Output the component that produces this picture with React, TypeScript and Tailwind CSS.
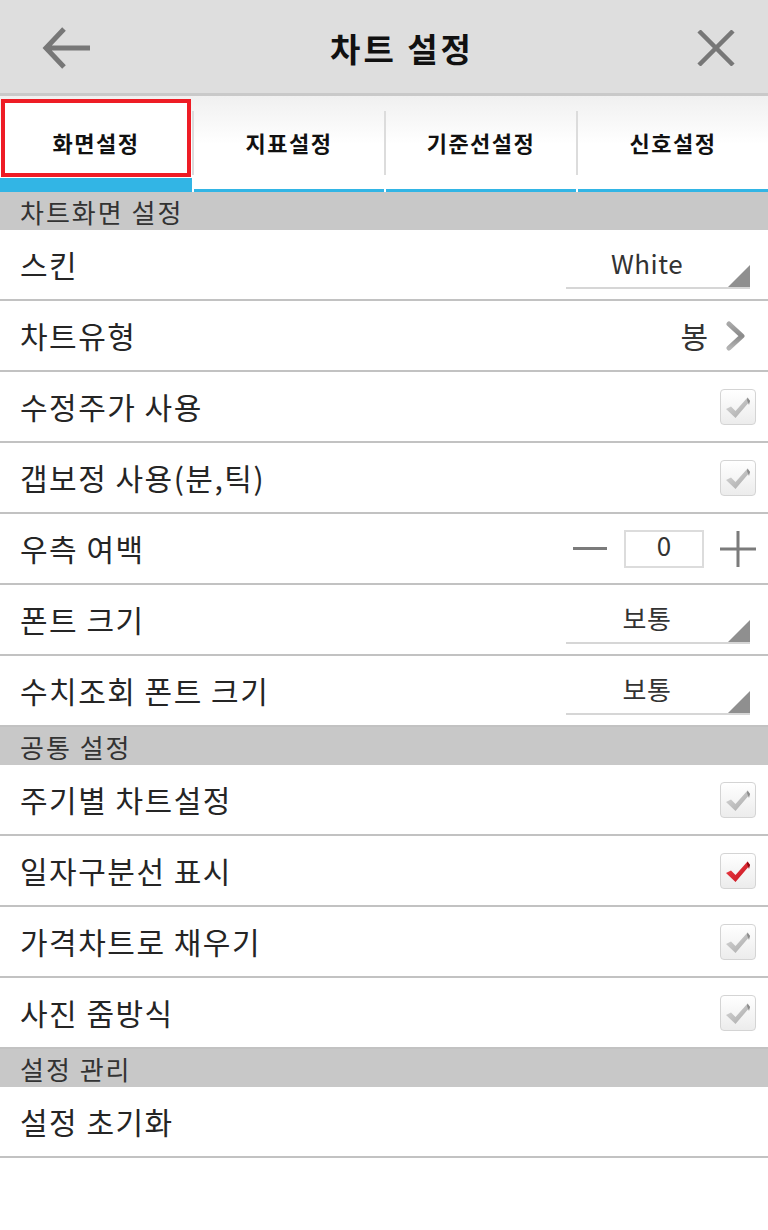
import React from 'react';

const FONT = { fontFamily: '"Noto Sans CJK KR", "Noto Sans", sans-serif' };

function Check({ on }: { on?: boolean }) {
  const id = on ? 'chkRed' : 'chkGray';
  return (
    <div className="flex h-[36px] w-[36px] items-center justify-center rounded-[4px] border border-[#d4d4d4] bg-gradient-to-b from-white to-[#ececec]">
      <svg width="30" height="30" viewBox="0 0 30 30">
        <defs>
          <linearGradient id={id} x1="0" y1="0" x2="1" y2="1">
            <stop offset="0" stopColor={on ? '#f0454d' : '#d8d8d8'} />
            <stop offset="1" stopColor={on ? '#c40f1a' : '#a8a8a8'} />
          </linearGradient>
        </defs>
        <path d="M3 17 L8 14.5 L12.5 19 L24.5 5.5 L27 9 L12.5 26 Z" fill={`url(#${id})`} />
        <path d="M24.5 5.5 L27 9 L26 13 L24 8 Z" fill={on ? '#8e0a12' : '#8c8c8c'} />
      </svg>
    </div>
  );
}

function Dropdown({ value }: { value: string }) {
  return (
    <div className="relative mr-[6px] h-[48px] w-[184px] border-b-2 border-[#d6d6d6]">
      <div className="flex h-full items-center justify-center pb-[2px] pr-[22px] text-[26px] tracking-[0.5px] text-[#333]">{value}</div>
      <svg className="absolute bottom-0 right-0" width="22" height="22" viewBox="0 0 22 22">
        <path d="M22 0 L22 22 L0 22 Z" fill="#8f8f8f" />
      </svg>
    </div>
  );
}

function Chevron() {
  return (
    <svg width="22" height="34" viewBox="0 0 22 34">
      <defs>
        <linearGradient id="chev" x1="0" y1="0" x2="0" y2="1">
          <stop offset="0" stopColor="#a8a8a8" />
          <stop offset="0.5" stopColor="#8a8a8a" />
          <stop offset="1" stopColor="#b4b4b4" />
        </linearGradient>
      </defs>
      <path d="M3 5 L16 17 L3 29" fill="none" stroke="url(#chev)" strokeWidth="5" strokeLinejoin="round" strokeLinecap="round" />
    </svg>
  );
}

function Stepper() {
  return (
    <div className="flex items-center">
      <div className="h-[3px] w-[34px] bg-[#7b7b7b]" />
      <div className="ml-[17px] flex h-[38px] w-[80px] items-center justify-center border-2 border-[#dcdcdc] pb-[8px] text-[26px] text-[#333]">0</div>
      <svg className="ml-[16px]" width="36" height="36" viewBox="0 0 36 36">
        <path d="M0 18 H36 M18 0 V36" stroke="#7b7b7b" strokeWidth="3" />
      </svg>
    </div>
  );
}

function Row({ label, children }: { label: string; children?: React.ReactNode }) {
  return (
    <div className="flex h-[71px] items-center justify-between border-b-2 border-[#c2c2c2] pl-[20px] pr-[12px]">
      <span className="text-[30px] tracking-[1.5px] text-[#252525]">{label}</span>
      {children}
    </div>
  );
}

function Section({ title }: { title: string }) {
  return (
    <div className="flex h-[38px] items-center bg-[#c8c8c8] pl-[20px] text-[26px] tracking-[2px] text-[#333]">{title}</div>
  );
}

const tabs = ['화면설정', '지표설정', '기준선설정', '신호설정'];

export default function App() {
  return (
    <div className="h-[1230px] w-[768px] bg-white" style={FONT}>
      {/* Header */}
      <div className="relative flex h-[96px] items-center justify-center border-b-[3px] border-[#c9c9c9] bg-[#dedede]">
        <svg className="absolute left-[42px] top-[26px]" width="50" height="44" viewBox="0 0 50 44">
          <path d="M22 3 L4 22 L22 41 M4 22 H48" fill="none" stroke="#777" strokeWidth="5" />
        </svg>
        <span className="ml-[36px] pt-[4px] text-[33px] font-bold tracking-[3px] text-[#111]">차트 설정</span>
        <svg className="absolute right-[33px] top-[30px]" width="38" height="36" viewBox="0 0 38 36">
          <path d="M2 1 L36 35 M36 1 L2 35" fill="none" stroke="#777" strokeWidth="4.5" />
        </svg>
      </div>

      {/* Tabs */}
      <div className="flex h-[96px] bg-gradient-to-b from-[#f0f0f0] via-white to-white">
        {tabs.map((t, i) => (
          <div key={t} className="flex flex-1 flex-col">
            {i === 0 ? (
              <>
                <div className="mx-[1px] mt-[3px] flex h-[78px] items-center justify-center border-[4px] border-[#ee1c25] bg-white pt-[8px]">
                  <span className="text-[22px] font-bold tracking-[1.5px] text-[#111]">{t}</span>
                </div>
                <div className="mt-auto h-[14px] bg-[#32b5e5]" />
              </>
            ) : (
              <>
                <div className="flex h-[93px] items-center">
                  <div className="h-[64px] w-[2px] bg-[#dcdcdc]" />
                  <div className="flex flex-1 items-center justify-center">
                    <span className="text-[22px] font-bold tracking-[1.5px] text-[#111]">{t}</span>
                  </div>
                </div>
                <div className="ml-[2px] h-[3px] bg-[#32b5e5]" />
              </>
            )}
          </div>
        ))}
      </div>

      <Section title="차트화면 설정" />
      <Row label="스킨"><Dropdown value="White" /></Row>
      <Row label="차트유형">
        <div className="flex items-center gap-[18px] pr-[8px]">
          <span className="text-[30px] text-[#333]">봉</span>
          <Chevron />
        </div>
      </Row>
      <Row label="수정주가 사용"><Check /></Row>
      <Row label="갭보정 사용(분,틱)"><Check /></Row>
      <Row label="우측 여백"><Stepper /></Row>
      <Row label="폰트 크기"><Dropdown value="보통" /></Row>
      <Row label="수치조회 폰트 크기"><Dropdown value="보통" /></Row>

      <Section title="공통 설정" />
      <Row label="주기별 차트설정"><Check /></Row>
      <Row label="일자구분선 표시"><Check on /></Row>
      <Row label="가격차트로 채우기"><Check /></Row>
      <Row label="사진 줌방식"><Check /></Row>

      <Section title="설정 관리" />
      <Row label="설정 초기화" />
    </div>
  );
}
